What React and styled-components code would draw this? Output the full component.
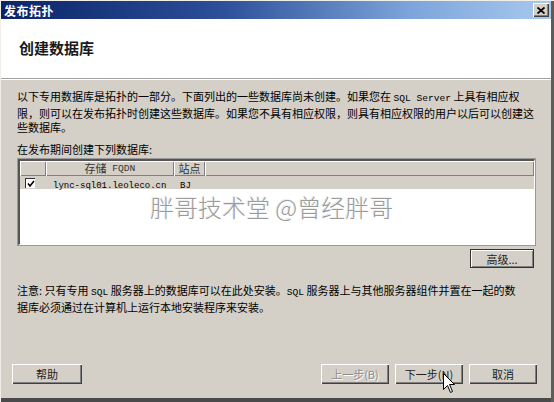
import styled, { createGlobalStyle } from 'styled-components';

const Global = createGlobalStyle`
  html, body { margin: 0; padding: 0; background: #d4d0c8; }
  * { box-sizing: border-box; }
`;

const cjk = `"Noto Sans CJK SC", "Noto Sans", sans-serif`;

const Window = styled.div`
  position: relative;
  width: 554px;
  height: 402px;
  background: #d4d0c8;
  display: flex;
  flex-direction: column;
  padding: 1px 3px 4px 1px;
  box-shadow: inset 1px 1px #f0eee8, inset -3px 0 #5c5c5c, inset 0 -4px #4a4a4a;
  font-family: ${cjk};
  font-size: 11px;
  color: #000;
  overflow: hidden;
`;

const TitleBar = styled.div`
  height: 18px;
  display: flex;
  align-items: center;
  justify-content: space-between;
  padding: 0 2px 0 3px;
  background: linear-gradient(90deg, #0b2468 0%, #2c4f98 40%, #7ea6dc 75%, #a8c9ee 100%);
`;

const TitleText = styled.span`
  color: #fff;
  font-size: 12px;
  font-weight: 700;
  letter-spacing: 0.5px;
`;

const CloseBtn = styled.div`
  width: 16px;
  height: 14px;
  background: #d4d0c8;
  display: flex;
  align-items: center;
  justify-content: center;
  box-shadow: inset 1px 1px #fff, inset -1px -1px #404040, inset -2px -2px #808080;
`;

const Header = styled.div`
  height: 60px;
  background: #fff;
  padding: 20px 0 0 18px;
  border-bottom: 1px solid #a0a0a0;
  box-shadow: 0 1px #fff;
`;

const HeaderTitle = styled.div`
  font-size: 15px;
  font-weight: 700;
  line-height: 18px;
  color: #1a1a1a;
`;

const Body = styled.div`
  flex: 1;
  display: flex;
  flex-direction: column;
  padding: 10px 17px 0 16px;
`;

const Para = styled.div`
  line-height: 14px;
  white-space: nowrap;
  margin-top: ${(p) => p.mt || 0}px;
`;

const Lat = styled.span`
  font-family: "Liberation Mono", monospace;
  font-size: ${(p) => p.fs || 9.6}px;
`;

const Table = styled.div`
  margin-top: 3px;
  margin-left: 1px;
  width: 517px;
  height: 86px;
  background: #fff;
  position: relative;
  border-top: 2px solid #555;
  border-left: 2px solid #555;
  border-right: 1px solid #fff;
  border-bottom: 1px solid #fff;
  box-shadow: 0 0 0 1px #9a9a9a;
`;

const HeadRow = styled.div`
  display: flex;
  height: 15px;
  background: #d4d0c8;
`;

const HeadCell = styled.div`
  width: ${(p) => (p.w ? `${p.w}px` : 'auto')};
  flex: ${(p) => (p.w ? 'none' : 1)};
  display: flex;
  align-items: center;
  justify-content: center;
  line-height: 13px;
  color: #333;
  box-shadow: inset 1px 1px #fff, inset -1px -1px #808080;
`;

const Row = styled.div`
  display: flex;
  align-items: center;
  height: 13px;
  background: #d4d0c8;
`;

const Cell = styled.div`
  width: ${(p) => p.w}px;
  padding-left: ${(p) => p.pl || 0}px;
  white-space: nowrap;
`;

const Check = styled.span`
  display: inline-flex;
  width: 10px;
  height: 10px;
  margin-left: 5px;
  border-left: 1px solid #333;
  border-top: 1px solid #333;
  background: #fff;
  align-items: center;
  justify-content: center;
`;

const Watermark = styled.div`
  position: absolute;
  left: 130px;
  top: 28px;
  font-size: 24px;
  font-weight: 300;
  color: #9b9b9b;
  white-space: nowrap;
  text-shadow: 1px 1px 0 #fff, -1px -1px 0 #eee;
`;

const Right = styled.div`
  display: flex;
  justify-content: flex-end;
  margin-top: 4px;
`;

const Button = styled.div`
  width: ${(p) => p.w || 68}px;
  height: ${(p) => p.h || 20}px;
  display: flex;
  align-items: center;
  justify-content: center;
  background: #d4d0c8;
  color: ${(p) => (p.disabled ? '#8a8a8a' : '#222')};
  text-shadow: ${(p) => (p.disabled ? '1px 1px #fff' : 'none')};
  box-shadow: ${(p) =>
    p.focus
      ? 'inset 0 0 0 1px #333, inset 2px 2px #fff, inset -2px -2px #808080'
      : 'inset 1px 1px #fff, inset -1px -1px #404040, inset -2px -2px #808080'};
  white-space: nowrap;
`;

const Footer = styled.div`
  margin-top: auto;
  display: flex;
  align-items: center;
  gap: 6px;
  padding: 0 14px 14px 11px;
`;

const Spacer = styled.div`
  flex: 1;
`;

const Cursor = styled.svg`
  position: absolute;
  left: 443px;
  top: 373px;
`;

export default function App() {
  return (
    <>
      <Global />
      <Window>
        <TitleBar>
          <TitleText>发布拓扑</TitleText>
          <CloseBtn>
            <svg width="8" height="7" viewBox="0 0 8 7">
              <path d="M0.5 0.5 L7.5 6.5 M7.5 0.5 L0.5 6.5" stroke="#000" strokeWidth="1.8" />
            </svg>
          </CloseBtn>
        </TitleBar>
        <Header>
          <HeaderTitle>创建数据库</HeaderTitle>
        </Header>
        <Body>
          <Para>
            以下专用数据库是拓扑的一部分。下面列出的一些数据库尚未创建。如果您在 <Lat>SQL Server</Lat> 上具有相应权
          </Para>
          <Para>限，则可以在发布拓扑时创建这些数据库。如果您不具有相应权限，则具有相应权限的用户以后可以创建这</Para>
          <Para>些数据库。</Para>
          <Para mt={8}>在发布期间创建下列数据库:</Para>
          <Table>
            <HeadRow>
              <HeadCell w={26} />
              <HeadCell w={128}>
                存储 <Lat>&nbsp;FQDN</Lat>
              </HeadCell>
              <HeadCell w={31}>站点</HeadCell>
              <HeadCell />
            </HeadRow>
            <Row>
              <Cell w={26}>
                <Check>
                  <svg width="8" height="8" viewBox="0 0 8 8">
                    <path d="M1 3.5 L3 6 L7 1" stroke="#000" strokeWidth="1.6" fill="none" />
                  </svg>
                </Check>
              </Cell>
              <Cell w={128} pl={7}>
                <Lat fs={9}>lync-sql01.leoleco.cn</Lat>
              </Cell>
              <Cell w={40} pl={6}>
                <Lat fs={9}>BJ</Lat>
              </Cell>
            </Row>
            <Watermark>胖哥技术堂 @曾经胖哥</Watermark>
          </Table>
          <Right>
            <Button w={64} h={19} focus>
              高级...
            </Button>
          </Right>
          <Para mt={15}>
            注意: 只有专用 <Lat>SQL</Lat> 服务器上的数据库可以在此处安装。<Lat>SQL</Lat> 服务器上与其他服务器组件并置在一起的数
          </Para>
          <Para>据库必须通过在计算机上运行本地安装程序来安装。</Para>
        </Body>
        <Footer>
          <Button w={70}>帮助</Button>
          <Spacer />
          <Button disabled>上一步(B)</Button>
          <Button>下一步(N)</Button>
          <Button>取消</Button>
        </Footer>
        <Cursor width="13" height="21" viewBox="0 0 13 21">
          <path d="M0.5 0.5 L0.5 16.5 L4.5 12.5 L7.5 19.5 L9.5 18.5 L6.5 11.5 L11.5 11.5 Z" fill="#fff" stroke="#000" strokeWidth="1" />
        </Cursor>
      </Window>
    </>
  );
}
